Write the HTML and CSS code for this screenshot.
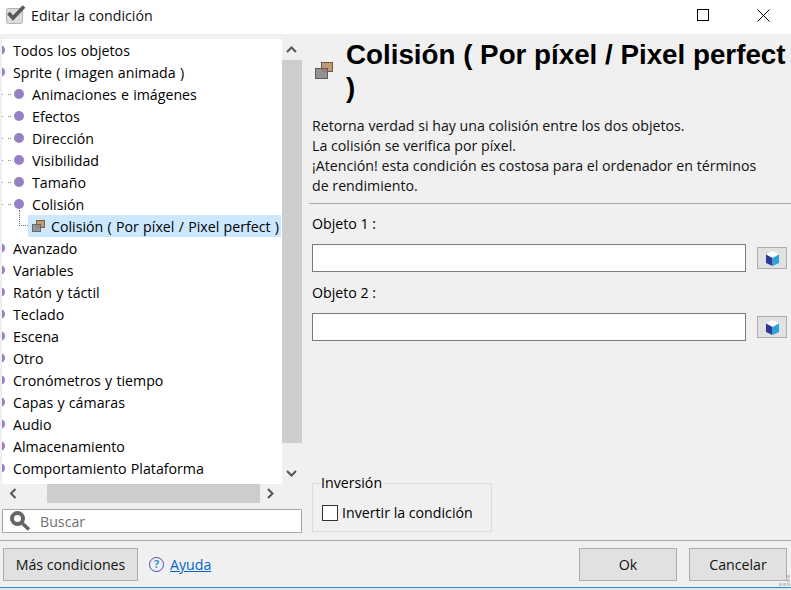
FILE: index.html
```html
<!DOCTYPE html>
<html lang="es">
<head>
<meta charset="utf-8">
<title>Editar la condición</title>
<link rel="stylesheet" href="styles.css">
</head>
<body>
<div class="window">
  <header class="titlebar">
    <svg class="app-icon" width="20" height="20" viewBox="0 0 20 20">
      <rect x=".5" y="3.500" width="16" height="15" rx="2" fill="#dcdcdc" stroke="#b4b4b4"/>
      <path d="M2.500 8l4.500 5 11-11.500" fill="none" stroke="#575757" stroke-width="3.600"/>
    </svg>
    <span class="title-text">Editar la condición</span>
    <svg class="win-btn max" width="12" height="12" viewBox="0 0 12 12"><rect x=".5" y=".5" width="11" height="11" fill="none" stroke="#000"/></svg>
    <svg class="win-btn close" width="13" height="13" viewBox="0 0 13 13"><path d="M.5.5l12 12M12.5.5l-12 12" fill="none" stroke="#000"/></svg>
  </header>

  <main class="main">
    <section class="left">
      <div class="tree-box">
        <ul class="tree">
          <li class="row top"><i class="dot"></i>Todos los objetos</li>
          <li class="row top"><i class="dot"></i>Sprite ( imagen animada )</li>
          <li class="row child"><i class="lead"></i><i class="dot"></i>Animaciones e imágenes</li>
          <li class="row child"><i class="lead"></i><i class="dot"></i>Efectos</li>
          <li class="row child"><i class="lead"></i><i class="dot"></i>Dirección</li>
          <li class="row child"><i class="lead"></i><i class="dot"></i>Visibilidad</li>
          <li class="row child"><i class="lead"></i><i class="dot"></i>Tamaño</li>
          <li class="row child"><i class="lead"></i><i class="dot"></i>Colisión</li>
          <li class="row grand"><i class="elbow"></i><span class="selected">
            <svg class="coll-small" width="14" height="14" viewBox="0 0 14 14">
              <rect x="5.5" y="1.5" width="8" height="7" fill="#c09a72" stroke="#7a5f45"/>
              <rect x="1.5" y="5.5" width="8" height="7" fill="#8d8d8d" fill-opacity=".9" stroke="#666"/>
            </svg>Colisión ( Por píxel / Pixel perfect )</span></li>
          <li class="row top"><i class="dot"></i>Avanzado</li>
          <li class="row top"><i class="dot"></i>Variables</li>
          <li class="row top"><i class="dot"></i>Ratón y táctil</li>
          <li class="row top"><i class="dot"></i>Teclado</li>
          <li class="row top"><i class="dot"></i>Escena</li>
          <li class="row top"><i class="dot"></i>Otro</li>
          <li class="row top"><i class="dot"></i>Cronómetros y tiempo</li>
          <li class="row top"><i class="dot"></i>Capas y cámaras</li>
          <li class="row top"><i class="dot"></i>Audio</li>
          <li class="row top"><i class="dot"></i>Almacenamiento</li>
          <li class="row top"><i class="dot"></i>Comportamiento Plataforma</li>
        </ul>
        <div class="vscroll">
          <svg class="arrow" width="19" height="21" viewBox="0 0 19 21"><path d="M5 13l4.500-4.500 4.500 4.500" fill="none" stroke="#555" stroke-width="2"/></svg>
          <div class="vthumb"></div>
          <svg class="arrow arrow-end" width="19" height="21" viewBox="0 0 19 21"><path d="M5 8l4.500 4.500 4.500-4.500" fill="none" stroke="#555" stroke-width="2"/></svg>
        </div>
      </div>
      <div class="hscroll">
        <svg class="harrow" width="21" height="19" viewBox="0 0 21 19"><path d="M13.500 5l-4.500 4.500 4.500 4.500" fill="none" stroke="#555" stroke-width="2"/></svg>
        <div class="hthumb"></div>
        <svg class="harrow" width="21" height="19" viewBox="0 0 21 19"><path d="M8 5l4.500 4.500-4.500 4.500" fill="none" stroke="#555" stroke-width="2"/></svg>
      </div>
      <div class="search">
        <svg width="22" height="20" viewBox="0 0 22 20"><circle cx="7.500" cy="7.500" r="5.500" fill="none" stroke="#666" stroke-width="4"/><path d="M11.500 11.500l7.500 7" stroke="#666" stroke-width="3.600" fill="none"/></svg>
        <span class="placeholder">Buscar</span>
      </div>
    </section>

    <section class="right">
      <div class="head">
        <svg class="coll-big" width="20" height="19" viewBox="0 0 20 19">
          <rect x="7.500" y="1.500" width="11" height="9" fill="#c09a72" stroke="#6f5740"/>
          <rect x="1.500" y="7.500" width="12" height="10" fill="#8b8b8b" fill-opacity=".92" stroke="#5c5c5c"/>
          <rect x="8" y="8" width="5" height="2" fill="#b5727a"/>
        </svg>
        <h1 class="heading">Colisión ( Por píxel / Pixel perfect )</h1>
      </div>
      <p class="desc">Retorna verdad si hay una colisión entre los dos objetos.<br>La colisión se verifica por píxel.<br>¡Atención! esta condición es costosa para el ordenador en términos<br>de rendimiento.</p>
      <hr class="rule">
      <label class="field-label">Objeto 1 :</label>
      <div class="field">
        <div class="input"></div>
        <button class="pick" type="button">
          <svg width="15" height="17" viewBox="0 0 15 17"><path d="M7.500 1L14 4.500 7.500 8 1 4.500z" fill="#fff"/><path d="M1 4.500L7.500 8v8L1 13z" fill="#2b3a96"/><path d="M14 4.500L7.500 8v8l6.500-3z" fill="#2ba2e0"/></svg>
        </button>
      </div>
      <label class="field-label second">Objeto 2 :</label>
      <div class="field">
        <div class="input"></div>
        <button class="pick" type="button">
          <svg width="15" height="17" viewBox="0 0 15 17"><path d="M7.500 1L14 4.500 7.500 8 1 4.500z" fill="#fff"/><path d="M1 4.500L7.500 8v8L1 13z" fill="#2b3a96"/><path d="M14 4.500L7.500 8v8l6.500-3z" fill="#2ba2e0"/></svg>
        </button>
      </div>
      <fieldset class="group">
        <legend class="group-title">Inversión</legend>
        <div class="check-row"><span class="checkbox"></span>Invertir la condición</div>
      </fieldset>
    </section>
  </main>

  <footer class="footer">
    <button class="btn more" type="button">Más condiciones</button>
    <span class="help-icon">?</span>
    <a class="help" href="#">Ayuda</a>
    <button class="btn ok" type="button">Ok</button>
    <button class="btn cancel" type="button">Cancelar</button>
    <svg class="grip" width="11" height="11" viewBox="0 0 11 11" fill="#c8c8c8"><rect x="8" width="3" height="3"/><rect x="8" y="4" width="3" height="3"/><rect y="8" width="3" height="3"/><rect x="4" y="8" width="3" height="3"/><rect x="8" y="8" width="3" height="3"/></svg>
  </footer>
  <div class="bottom-line"></div>
</div>
</body>
</html>
```
FILE: styles.css
```css
* { box-sizing: border-box; }
html, body { margin: 0; padding: 0; }
body {
  width: 791px;
  height: 590px;
  overflow: hidden;
  background: #f0f0f0;
  color: #000;
  font-family: "Open Sans", "Noto Sans", sans-serif;
  font-size: 14.2px;
}
.window { display: flex; flex-direction: column; height: 590px; }

.titlebar {
  height: 34px;
  padding-bottom: 4px;
  background: #fff;
  display: flex;
  align-items: center;
  flex: none;
}
.app-icon { margin-left: 6px; margin-right: 5px; }
.title-text { flex: 1; color: #111; }
.win-btn.max { margin-right: 48px; }
.win-btn.close { margin-right: 21px; }

.main { flex: none; height: 507px; display: flex; border-bottom: 1px solid #a9a9a9; }

.left { width: 302px; margin-left: 2px; padding-top: 5px; flex: none; display: flex; flex-direction: column; }
.tree-box { display: flex; height: 445px; width: 300px; }
.tree {
  list-style: none;
  margin: 0;
  padding: 0;
  width: 280px;
  background: #fff;
  overflow: hidden;
  word-spacing: 0.6px;
}
.row { height: 22px; display: flex; align-items: center; white-space: nowrap; }
.dot { width: 10px; height: 10px; border-radius: 50%; background: #9680c4; flex: none; }
.top .dot { margin-left: -7px; margin-right: 8px; }
.lead {
  flex: none;
  width: 1px;
  height: 1px;
  margin-left: 6px;
  margin-right: 5px;
  background: #888;
  box-shadow: 2px 0 #888, -6px 0 #888;
}
.child .dot { margin-right: 8px; }
.grand { padding-left: 17px; }
.elbow {
  align-self: flex-start;
  flex: none;
  width: 9px;
  height: 16px;
  margin-top: -5px;
  border-left: 1px dotted #777;
  border-bottom: 1px dotted #777;
}
.selected {
  display: flex;
  align-items: center;
  height: 22px;
  width: 253px;
  padding-left: 3px;
  background: #cce8ff;
}
.coll-small { margin-right: 6px; flex: none; }

.vscroll { width: 20px; background: #f0f0f0; display: flex; flex-direction: column; }
.arrow { flex: none; display: block; }
.arrow-end { margin-top: auto; }
.vthumb { height: 383px; flex: none; background: #cdcdcd; }
.hscroll { height: 19px; width: 300px; display: flex; align-items: center; flex: none; }
.harrow { flex: none; display: block; }
.hscroll .harrow:first-child { margin-right: 24px; }
.hscroll .harrow:last-child { margin-right: 19px; }
.hthumb { width: 213px; height: 19px; background: #cdcdcd; }
.search {
  margin-top: 6px;
  width: 300px;
  height: 24px;
  background: #fff;
  border: 1px solid #a8a8a8;
  display: flex;
  align-items: center;
  padding-left: 7px;
}
.placeholder { margin-left: 8px; color: #6f6f6f; }

.right { flex: 1; padding: 5px 0 0 6px; display: flex; flex-direction: column; min-width: 0; }
.head { display: flex; margin-left: 2px; height: 69px; flex: none; }
.coll-big { margin-top: 22px; margin-left: 2px; flex: none; }
.heading {
  margin: -1px 0 0 12px;
  font-family: "Liberation Sans", Arial, sans-serif;
  font-size: 27.750px;
  font-weight: 700;
  line-height: 33px;
  width: 445px;
}
.desc { margin: 8px 0 0 2px; line-height: 20px; flex: none; height: 80px; color: #111; }
.rule { margin: 7px 0 0 -1px; height: 1px; border: 0; background: #a9a9a9; flex: none; width: 489px; }
.field-label { margin: 10px 0 0 2px; line-height: 20px; display: block; flex: none; }
.field-label.second { margin-top: 11px; }
.field { display: flex; align-items: center; margin: 10px 0 0 2px; height: 28px; flex: none; }
.input { width: 434px; height: 28px; background: #fff; border: 1px solid #7a7a7a; }
.pick {
  margin: 0 0 0 11px;
  padding: 0;
  width: 30px;
  height: 22px;
  background: #e1e1e1;
  border: 1px solid #adadad;
  display: flex;
  align-items: center;
  justify-content: center;
}
.group {
  margin: auto 0 8px 2px;
  padding: 0 0 0 9px;
  width: 180px;
  height: 58px;
  border: 1px solid #dcdcdc;
  min-width: 0;
}
.group-title { padding: 0 2px 0 0; margin-left: -1px; line-height: 18px; }
.check-row { display: flex; align-items: center; margin-top: 11px; }
.checkbox { width: 16px; height: 16px; background: #fff; border: 1px solid #333; margin-right: 4px; flex: none; }

.footer { height: 46px; flex: none; display: flex; align-items: center; padding: 1px 0 0 3px; position: relative; }
.btn {
  font: inherit;
  color: #111;
  height: 33px;
  background: #e1e1e1;
  border: 1px solid #adadad;
  padding: 0;
}
.more { width: 135px; }
.help-icon {
  width: 15px;
  height: 15px;
  margin-left: 11px;
  border: 1.500px solid #3f4fa8;
  border-radius: 50%;
  color: #3a8ed8;
  font-size: 11px;
  font-weight: 700;
  line-height: 12px;
  text-align: center;
  flex: none;
}
.help { margin-left: 6px; color: #0066cc; }
.ok { width: 98px; margin-left: auto; }
.cancel { width: 98px; margin-left: 12px; margin-right: 4px; }
.grip { position: absolute; right: 1px; bottom: 1px; }
.bottom-line { height: 3px; flex: none; background: linear-gradient(#3a87c8 0 1px, #dfe6ec 1px); }
```
